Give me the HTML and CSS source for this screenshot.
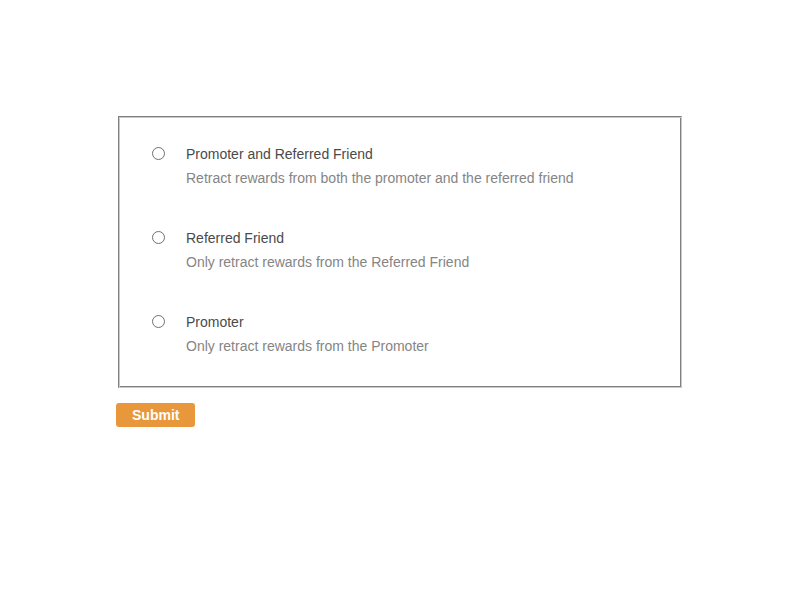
FILE: index.html
```html
<!DOCTYPE html>
<html>
<head>
<meta charset="utf-8">
<link rel="stylesheet" href="styles.css">
</head>
<body>
<div class="page">
  <form class="form">
    <fieldset class="options">
      <label class="option">
        <input type="radio" name="retract" class="radio">
        <span class="text">
          <span class="title">Promoter and Referred Friend</span>
          <span class="desc">Retract rewards from both the promoter and the referred friend</span>
        </span>
      </label>
      <label class="option">
        <input type="radio" name="retract" class="radio">
        <span class="text">
          <span class="title">Referred Friend</span>
          <span class="desc">Only retract rewards from the Referred Friend</span>
        </span>
      </label>
      <label class="option">
        <input type="radio" name="retract" class="radio">
        <span class="text">
          <span class="title">Promoter</span>
          <span class="desc">Only retract rewards from the Promoter</span>
        </span>
      </label>
    </fieldset>
    <button type="button" class="submit">Submit</button>
  </form>
</div>
</body>
</html>
```
FILE: styles.css
```css
html, body {
  margin: 0;
  padding: 0;
  background: #fff;
}
body {
  font-family: "Liberation Sans", Arial, Helvetica, sans-serif;
  font-size: 14px;
}
.page {
  padding-top: 116px;
}
.form {
  width: 568px;
  margin: 0 auto;
}
.options {
  margin: 0 2px;
  padding: 25px 0 29px 33px;
  border: 1px solid #808080;
  border-right-color: #c8c8c8;
  border-bottom-color: #c8c8c8;
  box-shadow: inset 1px 1px 0 #c8c8c8, inset -1px -1px 0 #808080;
  display: flex;
  flex-direction: column;
  gap: 36px;
}
.option {
  display: flex;
  align-items: flex-start;
  cursor: pointer;
}
.radio {
  appearance: none;
  -webkit-appearance: none;
  width: 13px;
  height: 13px;
  margin: 5px 21px 0 0;
  border: 1px solid #6f6f6f;
  border-radius: 50%;
  background: #fff;
  flex: none;
  box-sizing: border-box;
}
.text {
  display: flex;
  flex-direction: column;
  line-height: 24px;
}
.title {
  color: #4a4a4a;
}
.desc {
  color: #858585;
}
.submit {
  margin-top: 15px;
  height: 24px;
  padding: 0 16px;
  border: none;
  border-radius: 3px;
  background: #e8983a;
  color: #fff;
  font-family: "Liberation Sans", Arial, Helvetica, sans-serif;
  font-weight: bold;
  font-size: 14px;
  line-height: 24px;
}
```
